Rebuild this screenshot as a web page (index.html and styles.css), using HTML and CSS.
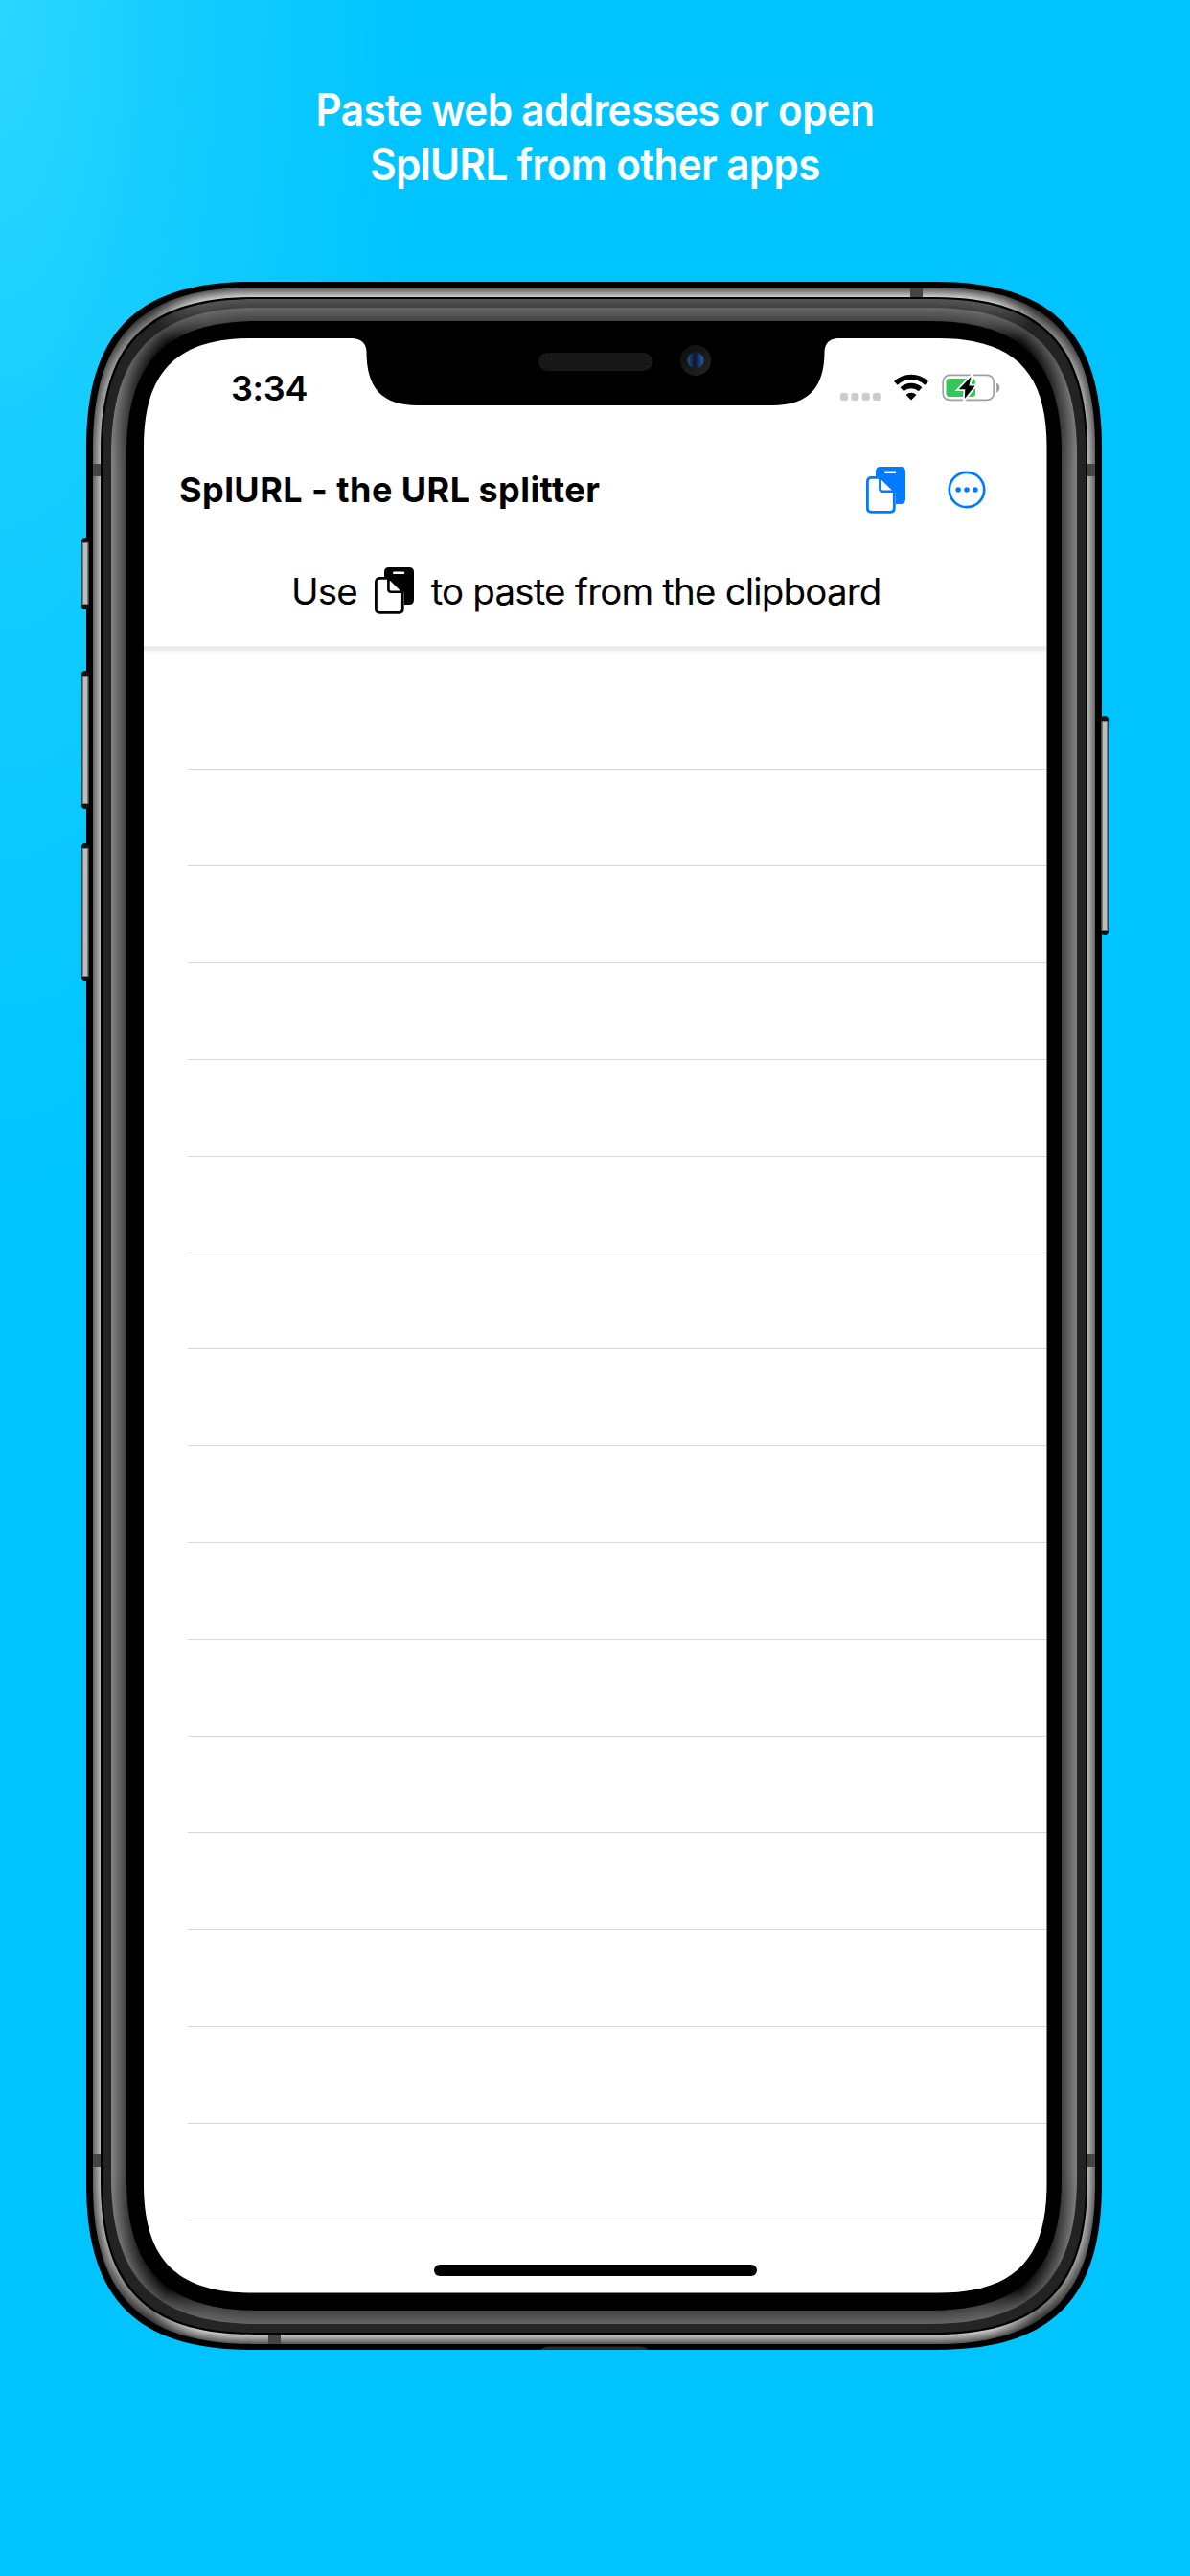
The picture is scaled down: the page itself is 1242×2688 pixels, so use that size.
FILE: index.html
```html
<!DOCTYPE html>
<html lang="en">
<head>
<meta charset="utf-8">
<title>SplURL</title>
<link rel="stylesheet" href="styles.css">
</head>
<body>
<svg width="0" height="0" class="defs">
  <symbol id="paste" viewBox="0 0 41 49">
    <path fill="currentColor" fill-rule="evenodd" d="M15 0H36Q41 0 41 5V34Q41 39 36 39H31V27L14.500 12.500V10H10V5Q10 0 15 0ZM20.300 4.400Q19 4.400 19 5.700Q19 7 20.300 7H30Q31.300 7 31.300 5.700Q31.300 4.400 30 4.400Z"/>
    <path fill="#fff" stroke="currentColor" stroke-width="2.800" stroke-linejoin="round" d="M14.500 11.400H5.400Q1.400 11.400 1.400 15.400V43.300Q1.400 47.300 5.400 47.300H25.600Q29.300 47.300 29.300 43.300V25.700L14.500 11.400Z"/>
    <path fill="#fff" d="M15.700 13.400L27.400 25H17.300Q15.700 25 15.700 23.400Z"/>
    <path fill="none" stroke="currentColor" stroke-width="2.600" d="M14.400 11.400V23Q14.400 25.700 17 25.700H29"/>
  </symbol>
</svg>
<main class="poster">
  <h1 class="headline">Paste web addresses or open<br>SplURL from other apps</h1>
  <div class="phone">
    <svg class="hardware" viewBox="80 284 1082 2178" id="hardware"></svg>
    <section class="screen">
      <header class="status">
        <span class="time">3:34</span>
        <svg class="indicators" width="170" height="34" viewBox="876 387 170 34">
          <g fill="#ccc"><rect x="877" y="410" width="8" height="8" rx="2.500"/><rect x="888.400" y="410" width="8" height="8" rx="2.500"/><rect x="899.700" y="410" width="8" height="8" rx="2.500"/><rect x="911" y="410" width="8" height="8" rx="2.500"/></g>
          <g fill="none" stroke="#000" stroke-width="5.300"><path d="M934.900 399.800A23.400 23.400 0 0 1 967.100 399.800"/><path d="M941.400 406.300A14 14 0 0 1 960.600 406.300"/></g>
          <path d="M951 417.400L945.600 412A7.600 7.600 0 0 1 956.400 412Z"/>
          <rect x="984.200" y="391.400" width="53" height="26" rx="7" fill="none" stroke="#a0a0a0" stroke-width="1.700"/>
          <path fill="#999" d="M1040.200 399.500Q1043.300 401 1043.300 404.500T1040.200 409.500Z"/>
          <rect x="987.500" y="395" width="30.500" height="19" rx="3.500" fill="#34c759"/>
          <path d="M1013.500 393L1000.700 406.300H1007.300L1006.800 416L1017.700 402.500H1011.400Z" stroke="#fff" stroke-width="3.600" paint-order="stroke"/>
        </svg>
      </header>
      <nav class="bar">
        <h2 class="title">SplURL - the URL splitter</h2>
        <svg class="paste"><use href="#paste"/></svg>
        <svg class="more" width="40" height="40" viewBox="-20 -20 40 40"><circle r="18.200" fill="none" stroke="#007aff" stroke-width="2.700"/><g fill="#007aff"><circle cx="-8.900" r="2.750"/><circle r="2.750"/><circle cx="8.900" r="2.750"/></g></svg>
      </nav>
      <p class="hint"><span class="lead">Use</span><svg class="paste"><use href="#paste"/></svg><span>to paste from the clipboard</span></p>
      <ul class="rows"><li></li><li></li><li></li><li></li><li></li><li></li><li></li><li></li><li></li><li></li><li></li><li></li><li></li><li></li><li></li><li></li></ul>
      <div class="home"></div>
    </section>
    <svg class="notch" viewBox="360 350 524 75">
      <defs>
        <pattern id="mesh" width="4" height="4" patternUnits="userSpaceOnUse"><rect width="4" height="4" fill="#191919"/><path d="M0 0H4M0 0V4" stroke="#101010"/></pattern>
        <linearGradient id="lens"><stop offset="0" stop-color="#245486"/><stop offset=".45" stop-color="#0c1430"/><stop offset="1" stop-color="#2262a4"/></linearGradient>
        <linearGradient id="rim" x2="1" y2="1"><stop offset="0" stop-color="#0c0c0c"/><stop offset="1" stop-color="#252525"/></linearGradient>
      </defs>
      <path d="M360 350H884V353H874Q861 354 860.500 367C860.500 404 844 423 806 423H436C398 423 382.500 404 382.500 367Q382 354 368 353H360Z"/>
      <rect x="562" y="368" width="119" height="19" rx="9.500" fill="url(#mesh)"/>
      <circle cx="726" cy="376" r="16" fill="url(#rim)"/><circle cx="726" cy="376" r="8.500" fill="url(#lens)"/>
    </svg>
  </div>
</main>
<script src="phone.js"></script>
</body>
</html>
```
FILE: styles.css
```css
* { box-sizing: border-box; }
body { margin: 0; font-family: Inter, "Liberation Sans", sans-serif; color: #000; }
.defs { position: absolute; }
.poster { width: 1242px; height: 2688px; overflow: hidden; padding-top: 86px; background: radial-gradient(ellipse 430px 1250px at 0 0, #2bd6ff 0, #16cdff 40%, #00c4ff 100%); }
.headline { margin: 0; height: 208px; text-align: center; color: #fff; font-size: 46.500px; line-height: 57px; font-weight: 630; letter-spacing: -.7px; transform: scaleX(.908); }
.phone { position: relative; margin-left: 90px; width: 1060px; height: 2158px; padding: 59px 58px 60px 60px; }
.hardware { position: absolute; left: -10px; top: -10px; width: 1082px; height: 2178px; }
.notch { position: absolute; left: 270px; top: 56px; width: 524px; height: 75px; }
.screen { position: relative; display: flex; flex-direction: column; height: 2039px; border-radius: 0 0 110px 110px; overflow: hidden; }
.status { display: flex; justify-content: space-between; height: 110px; padding: 34px 46px 0 91px; }
.time { font-size: 36px; line-height: 36px; font-weight: 580; letter-spacing: -.3px; }
.bar { display: flex; align-items: center; height: 96px; padding: 0 63px 0 37px; }
.title { margin: 0; flex: 1; font-size: 36px; font-weight: 680; letter-spacing: .45px; }
.paste { width: 41px; height: 49px; display: block; }
.bar .paste { color: #007aff; margin-right: 44px; }
.hint { margin: 0; display: flex; align-items: center; height: 115px; padding-left: 154px; font-size: 38.500px; letter-spacing: -.83px; }
.hint .lead { width: 86.700px; }
.hint .paste { margin-right: 18px; }
.rows { list-style: none; margin: 0; padding: 28px 0 0 46px; background: linear-gradient(#ebebeb 4px, #f6f6f6 5px, #fff0 9px); }
.rows li { height: 100.930px; border-bottom: 1.500px solid #d6d6d8; }
.home { position: absolute; left: 303px; bottom: 17px; width: 337px; height: 12px; border-radius: 6px; background: #000; }
```
FILE: phone.js
```javascript
// Draws the handset body as nested continuous-corner outlines.
const NS = 'http://www.w3.org/2000/svg';
const root = document.getElementById('hardware');

function add(parent, tag, attrs) {
  const el = document.createElementNS(NS, tag);
  for (const k in attrs) el.setAttribute(k, attrs[k]);
  parent.appendChild(el);
  return el;
}

function outline(l, t, r, b, rad) {
  const e = rad * 1.22;
  const c = e - rad * 0.849;
  return `M${l + e} ${t}H${r - e}C${r - c} ${t} ${r} ${t + c} ${r} ${t + e}V${b - e}` +
    `C${r} ${b - c} ${r - c} ${b} ${r - e} ${b}H${l + e}C${l + c} ${b} ${l} ${b - c} ${l} ${b - e}` +
    `V${t + e}C${l} ${t + c} ${l + c} ${t} ${l + e} ${t}Z`;
}

const grey = v => `rgb(${v},${v},${v})`;
const mix = (a, b, t) => Math.round(a + (b - a) * t);
let count = 0;

// top, dip, side and bottom are grey levels for the parts of one outline
function layer(ix, iy, rad, top, dip, side, bottom) {
  const id = 'g' + count++;
  const g = add(root, 'linearGradient', { id, gradientUnits: 'userSpaceOnUse', x1: 0, x2: 0, y1: 294, y2: 2452 });
  const stops = [[iy + 6, top], [iy + 24, dip], [iy + 85, mix(dip, side, 0.7)], [190, side], [2158 - 190, side], [2158 - iy - 85, mix(dip, side, 0.7)], [2158 - iy - 24, dip], [2158 - iy - 6, bottom]];
  stops.forEach(([y, v]) => add(g, 'stop', { offset: y / 2158, 'stop-color': grey(v) }));
  add(root, 'path', { d: outline(90 + ix, 294 + iy, 1150 - ix, 2452 - iy, rad), fill: `url(#${id})` });
}

function button(x, y, h) {
  add(root, 'rect', { x, y, width: 8, height: h, rx: 4, fill: '#111' });
  add(root, 'rect', { x: x + 0.5, y: y + 5, width: 7, height: h - 10, rx: 1, fill: '#777' });
  add(root, 'rect', { x: x + 2, y: y + 6, width: 4, height: h - 12, fill: '#bdbdbd' });
}

layer(0, 0, 142, 0, 0, 0, 0);
button(85, 561, 75);
button(85, 700, 144);
button(85, 880, 144);
button(1149, 747, 229);
for (let i = 0; i < 10; i++) {
  const t = i / 9;
  layer(7 + i * 0.8, 6 + i, 137 - i * 0.6, mix(90, 200, t), mix(50, 120, t), mix(105, 180, t), mix(90, 200, t));
}
for (const [x, y, w, h] of [[950, 300, 13, 10], [97, 484, 8, 13], [1135, 484, 8, 13], [97, 2248, 8, 13], [1135, 2248, 8, 13], [280, 2436, 13, 10]]) {
  add(root, 'rect', { x, y, width: w, height: h, fill: '#444' });
}
add(root, 'path', { d: 'M564 2452Q567 2448.500 573 2448.500H668Q674 2448.500 677 2452Z', fill: '#2c2c2c' });
layer(15, 16, 131, 0, 0, 0, 0);
for (let i = 0; i < 9; i++) layer(17 + i, 18 + i, 130 - i * 0.5, mix(85, 64, i / 8), 35, 35, 37);
for (let i = 0; i < 14; i++) {
  const t = i / 13;
  layer(26 + i * 16 / 14, 27 + i, 126 - i * 0.9, mix(104, 68, t), mix(75, 10, t), mix(130, 68, t), mix(100, 68, t));
}
layer(42, 41, 113, 0, 0, 0, 0);
add(root, 'path', { d: outline(150, 353, 1092.5, 2392.5, 93), fill: '#fff' });
```
